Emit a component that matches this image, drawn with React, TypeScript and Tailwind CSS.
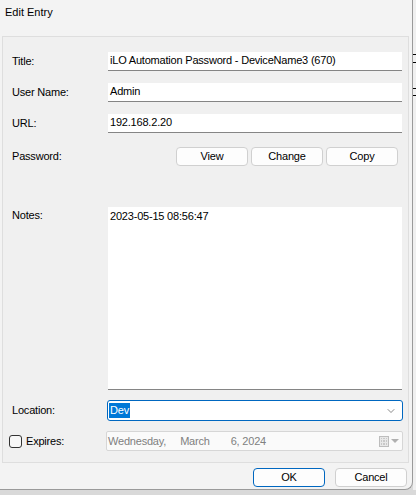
import { ChevronDown } from "lucide-react";

const font = { fontFamily: '"Liberation Sans", Arial, sans-serif' };

function Label({ children }: { children: React.ReactNode }) {
  return <div className="w-[96px] shrink-0 text-[11px] tracking-[-0.2px] text-black">{children}</div>;
}

function TextBox({ value }: { value: string }) {
  return (
    <div className="h-[19px] flex-1 bg-white border-b border-[#858585] pl-[2px] text-[11px] tracking-[-0.2px] leading-[17px] text-black">
      {value}
    </div>
  );
}

function Btn({ label, primary }: { label: string; primary?: boolean }) {
  return (
    <button
      className={`h-[19px] w-[72px] rounded-[4px] bg-[#fdfdfd] text-[11px] tracking-[-0.2px] leading-[17px] text-black ${
        primary ? "border border-[#0067c0]" : "border border-[#d0d0d0]"
      }`}
    >
      {label}
    </button>
  );
}

export default function App() {
  return (
    <div className="relative w-[416px] h-[495px] bg-[#d9d9d9] overflow-hidden" style={font}>
      {/* bits of whatever sits behind the dialog */}
      <div className="absolute right-0 top-0 w-[3px] h-[490px] bg-[#f0f0f0]" />
      <div className="absolute right-0 top-[54px] w-[3px] h-px bg-black" />
      <div className="absolute right-0 top-[62px] w-[3px] h-px bg-black" />
      <div className="absolute right-0 top-[88px] w-[3px] h-px bg-black" />
      <div className="absolute right-0 top-[95px] w-[3px] h-px bg-black" />

      <div className="relative w-[413px] h-[490px] bg-[#f3f3f3] border-r border-b border-[#9a9a9a] rounded-br-[8px] flex flex-col">
        <div className="h-[36px] pl-[5px] pt-[4px] text-[11px] text-black">Edit Entry</div>

        <div className="ml-[2px] mr-[3px] h-[427px] bg-[#f0f0f0] border-l border-t border-r border-b border-[#dedede] pl-[9px] pr-[6px] pt-[15px] flex flex-col">
          <div className="flex items-center">
            <Label>Title:</Label>
            <TextBox value="iLO Automation Password - DeviceName3 (670)" />
          </div>
          <div className="flex items-center mt-[12px]">
            <Label>User Name:</Label>
            <TextBox value="Admin" />
          </div>
          <div className="flex items-center mt-[12px]">
            <Label>URL:</Label>
            <TextBox value="192.168.2.20" />
          </div>
          <div className="flex items-center mt-[14px] pr-[4px]">
            <Label>Password:</Label>
            <div className="flex-1 flex justify-end gap-[3px]">
              <Btn label="View" />
              <Btn label="Change" />
              <Btn label="Copy" />
            </div>
          </div>

          <div className="flex mt-[41px]">
            <div className="w-[96px] shrink-0 text-[11px] tracking-[-0.2px] text-black">Notes:</div>
            <div className="h-[183px] flex-1 bg-white border-b border-[#858585] pl-[2px] pt-[1px] text-[11px] tracking-[-0.2px] text-black">
              2023-05-15 08:56:47
            </div>
          </div>

          <div className="flex items-center mt-[10px]">
            <div className="w-[95px] shrink-0 text-[11px] tracking-[-0.2px] text-black">Location:</div>
            <div className="flex-1 h-[21px] rounded-[3px] border border-[#0067c0] bg-white flex items-center pl-[1px] pr-[5px] -mr-[1px]">
              <span className="bg-[#0078d7] text-white text-[11px] tracking-[-0.2px] leading-[15px] px-[1px]">Dev</span>
              <ChevronDown className="ml-auto w-[12px] h-[12px] text-[#444]" strokeWidth={1.25} />
            </div>
          </div>

          <div className="flex items-center mt-[10px] -ml-[3px]">
            <div className="w-[97px] shrink-0 flex items-center gap-[4px]">
              <div className="w-[13px] h-[13px] rounded-[3px] border border-[#333] bg-[#f7f7f7]" />
              <span className="text-[11px] tracking-[-0.2px] text-black">Expires:</span>
            </div>
            <div className="flex-1 h-[20px] rounded-[2px] border border-[#d6d6d6] bg-[#fafafa] flex items-center pl-[1px] pr-[3px] -mr-[1px] text-[11px] tracking-[-0.2px] text-[#808080]">
              <span>Wednesday,</span>
              <span className="ml-[14px]">March</span>
              <span className="ml-[21px]">6, 2024</span>
              <div className="ml-auto flex items-center gap-[2px]">
                <div className="w-[10px] h-[11px] border border-[#bdbdbd] bg-[#e8e8e8] grid grid-cols-3 gap-[1px] p-[1px]">
                  {Array.from({ length: 9 }).map((_, i) => (
                    <div key={i} className="bg-[#c8c8c8]" />
                  ))}
                </div>
                <div className="w-0 h-0 border-l-[4px] border-r-[4px] border-t-[4px] border-l-transparent border-r-transparent border-t-[#b0b0b0]" />
              </div>
            </div>
          </div>
        </div>

        <div className="flex justify-end gap-[10px] pr-[5px] pt-[5px]">
          <Btn label="OK" primary />
          <Btn label="Cancel" />
        </div>
      </div>
    </div>
  );
}
